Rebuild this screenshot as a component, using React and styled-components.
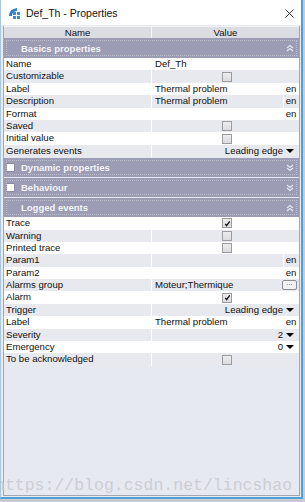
import styled, { createGlobalStyle } from "styled-components";

const GlobalStyle = createGlobalStyle`
  body {
    margin: 0;
    background: #c8cbd3;
    font-family: "Liberation Sans", Arial, sans-serif;
  }
`;

const basicRows = [
  { name: "Name", type: "text", text: "Def_Th" },
  { name: "Customizable", type: "check" },
  { name: "Label", type: "lang", text: "Thermal problem" },
  { name: "Description", type: "lang", text: "Thermal problem" },
  { name: "Format", type: "lang", text: "" },
  { name: "Saved", type: "check" },
  { name: "Initial value", type: "check" },
  { name: "Generates events", type: "drop", text: "Leading edge" },
];

const loggedRows = [
  { name: "Trace", type: "check", checked: true },
  { name: "Warning", type: "check" },
  { name: "Printed trace", type: "check" },
  { name: "Param1", type: "lang", text: "" },
  { name: "Param2", type: "lang", text: "" },
  { name: "Alarms group", type: "browse", text: "Moteur;Thermique" },
  { name: "Alarm", type: "check", checked: true },
  { name: "Trigger", type: "drop", text: "Leading edge" },
  { name: "Label", type: "lang", text: "Thermal problem" },
  { name: "Severity", type: "drop", text: "2" },
  { name: "Emergency", type: "drop", text: "0" },
  { name: "To be acknowledged", type: "check" },
];

export default function App() {
  return (
    <>
      <GlobalStyle />
      <Window>
        <TitleBar>
          <AppIcon />
          <Title>Def_Th - Properties</Title>
          <CloseIcon />
        </TitleBar>
        <Body>
          <Grid>
            <HeaderRow>
              <HeaderCell>Name</HeaderCell>
              <HeaderCell>Value</HeaderCell>
            </HeaderRow>
            <Section title="Basics properties" open first />
            {basicRows.map((row, i) => (
              <PropRow key={row.name} row={row} alt={i % 2 === 1} />
            ))}
            <Section title="Dynamic properties" box />
            <Section title="Behaviour" box />
            <Section title="Logged events" open />
            {loggedRows.map((row, i) => (
              <PropRow key={row.name + i} row={row} alt={i % 2 === 1} />
            ))}
          </Grid>
        </Body>
        <Watermark>https://blog.csdn.net/lincshao</Watermark>
      </Window>
    </>
  );
}

function Section({ title, open, box, first }) {
  return (
    <SectionHeader $first={first}>
      <BoxSlot>{box && <WhiteBox />}</BoxSlot>
      <SectionTitle>{title}</SectionTitle>
      <svg width="8" height="8" viewBox="0 0 8 8">
        {open ? (
          <path
            d="M1 4 L4 1.5 L7 4 M1 7 L4 4.5 L7 7"
            fill="none"
            stroke="#e6e6f0"
            strokeWidth="1.1"
          />
        ) : (
          <path
            d="M1 1 L4 3.5 L7 1 M1 4 L4 6.5 L7 4"
            fill="none"
            stroke="#e6e6f0"
            strokeWidth="1.1"
          />
        )}
      </svg>
    </SectionHeader>
  );
}

function PropRow({ row, alt }) {
  return (
    <Row $alt={alt}>
      <NameCell>{row.name}</NameCell>
      <ValueCell>
        {row.type === "text" && <ValueText>{row.text}</ValueText>}
        {row.type === "check" && (
          <CheckWrap>
            <Check>{row.checked && <CheckMark />}</Check>
          </CheckWrap>
        )}
        {row.type === "lang" && (
          <>
            <ValueText>{row.text}</ValueText>
            <Lang>en</Lang>
          </>
        )}
        {row.type === "drop" && (
          <DropValue>
            {row.text}
            <Arrow />
          </DropValue>
        )}
        {row.type === "browse" && (
          <>
            <ValueText>{row.text}</ValueText>
            <BrowseButton>...</BrowseButton>
          </>
        )}
      </ValueCell>
    </Row>
  );
}

function AppIcon() {
  return (
    <IconBox width="14" height="12" viewBox="0 0 14 12">
      <path d="M1 9 Q1 2 9 1 L9 4 Q4 4.5 4 9 Z" fill="#2f7fd0" />
      <rect x="5" y="5" width="3" height="3" fill="#3a8ad8" />
      <rect x="9" y="5" width="3" height="3" fill="#3a8ad8" />
      <rect x="5" y="9" width="3" height="3" fill="#3a8ad8" />
      <rect x="9" y="9" width="3" height="3" fill="#3a8ad8" />
    </IconBox>
  );
}

function CloseIcon() {
  return (
    <CloseSvg width="9" height="9" viewBox="0 0 9 9">
      <path d="M0.5 0.5 L8.5 8.5 M8.5 0.5 L0.5 8.5" stroke="#3a3a3a" strokeWidth="1" />
    </CloseSvg>
  );
}

function CheckMark() {
  return (
    <svg width="7" height="7" viewBox="0 0 8 8">
      <path d="M1.5 4.5 L3 6.5 L6.5 1.5" fill="none" stroke="#111" strokeWidth="1.5" />
    </svg>
  );
}

const Window = styled.div`
  position: relative;
  width: 303px;
  height: 499px;
  box-sizing: border-box;
  display: flex;
  flex-direction: column;
  border-left: 1px solid #a9c6de;
  border-right: 2px solid #4ea2d6;
  border-bottom: 2px solid #4ea2d6;
  background: #e9ebf2;
  overflow: hidden;
`;

const TitleBar = styled.div`
  height: 25px;
  flex: none;
  display: flex;
  align-items: center;
  background: #ffffff;
  padding: 0 7px 0 7px;
`;

const IconBox = styled.svg`
  flex: none;
  margin-right: 4px;
  margin-top: 1px;
`;

const Title = styled.div`
  flex: 1;
  font-size: 10.5px;
  color: #111;
  margin-top: 1px;
`;

const CloseSvg = styled.svg`
  flex: none;
  margin-top: 1px;
`;

const Body = styled.div`
  flex: 1;
  display: flex;
  padding: 1px 1px 1px 2px;
  min-height: 0;
`;

const Grid = styled.div`
  flex: 1;
  display: flex;
  flex-direction: column;
  border: 1px solid #a3a6b0;
  border-top: none;
  background: #e7e9f1;
`;

const HeaderRow = styled.div`
  display: grid;
  grid-template-columns: 147px 1fr;
  height: 11px;
  background: #dcdde3;
  border-top: 1px solid #f3f3f6;
`;

const HeaderCell = styled.div`
  font-size: 9.6px;
  line-height: 11px;
  color: #111;
  text-align: center;
  & + & {
    border-left: 1px solid #f4f4f7;
  }
`;

const SectionHeader = styled.div`
  position: relative;
  height: ${(p) => (p.$first ? "20px" : "19px")};
  margin-top: ${(p) => (p.$first ? "0" : "1px")};
  display: flex;
  align-items: center;
  padding: 0 5px 0 2px;
  background: #9c9db4;
  box-sizing: border-box;
  flex: none;

  &::after {
    content: "";
    position: absolute;
    inset: 2px;
    border: 1px dotted rgba(255, 255, 255, 0.35);
    pointer-events: none;
  }
`;

const BoxSlot = styled.div`
  width: 15px;
  flex: none;
  display: flex;
  align-items: center;
`;

const WhiteBox = styled.div`
  width: 9px;
  height: 9px;
  background: #ffffff;
  border: 1px solid #8c8ca2;
  box-sizing: border-box;
`;

const SectionTitle = styled.div`
  flex: 1;
  font-size: 9.5px;
  font-weight: bold;
  color: #f4f4f8;
`;

const Row = styled.div`
  display: grid;
  grid-template-columns: 147px 1fr;
  height: 12.4px;
  flex: none;
  background: ${(p) => (p.$alt ? "#e8e9ef" : "#ffffff")};
  font-size: 9.6px;
  line-height: 12.4px;
  color: #111;
`;

const NameCell = styled.div`
  padding-left: 2px;
  white-space: nowrap;
  overflow: hidden;
`;

const ValueCell = styled.div`
  display: flex;
  align-items: center;
  border-left: 1px solid #ffffff;
  min-width: 0;
`;

const ValueText = styled.div`
  flex: 1;
  padding-left: 3px;
  white-space: nowrap;
`;

const Lang = styled.div`
  width: 14px;
  padding-right: 1px;
  text-align: center;
  border-left: 1px solid #ffffff;
  align-self: stretch;
`;

const CheckWrap = styled.div`
  flex: 1;
  display: flex;
  justify-content: center;
  padding-left: 3px;
`;

const Check = styled.div`
  width: 10px;
  height: 10px;
  box-sizing: border-box;
  border: 1px solid #9b9ba0;
  background: linear-gradient(#ececee, #dcdce0);
  display: flex;
  align-items: center;
  justify-content: center;
`;

const DropValue = styled.div`
  flex: 1;
  display: flex;
  justify-content: flex-end;
  align-items: center;
  padding-right: 5px;
`;

const Arrow = styled.span`
  width: 0;
  height: 0;
  margin-left: 3px;
  border-left: 4px solid transparent;
  border-right: 4px solid transparent;
  border-top: 4px solid #000;
`;

const BrowseButton = styled.div`
  width: 13px;
  height: 8px;
  margin-right: 2px;
  border: 1px solid #8d8d92;
  border-radius: 2px;
  background: #f1f1f3;
  font-size: 7px;
  line-height: 4px;
  text-align: center;
  color: #333;
`;

const Watermark = styled.div`
  position: absolute;
  left: -6px;
  top: 476px;
  font-family: "Liberation Mono", "Courier New", monospace;
  font-size: 16.5px;
  color: #cdced3;
  white-space: nowrap;
  pointer-events: none;
`;
